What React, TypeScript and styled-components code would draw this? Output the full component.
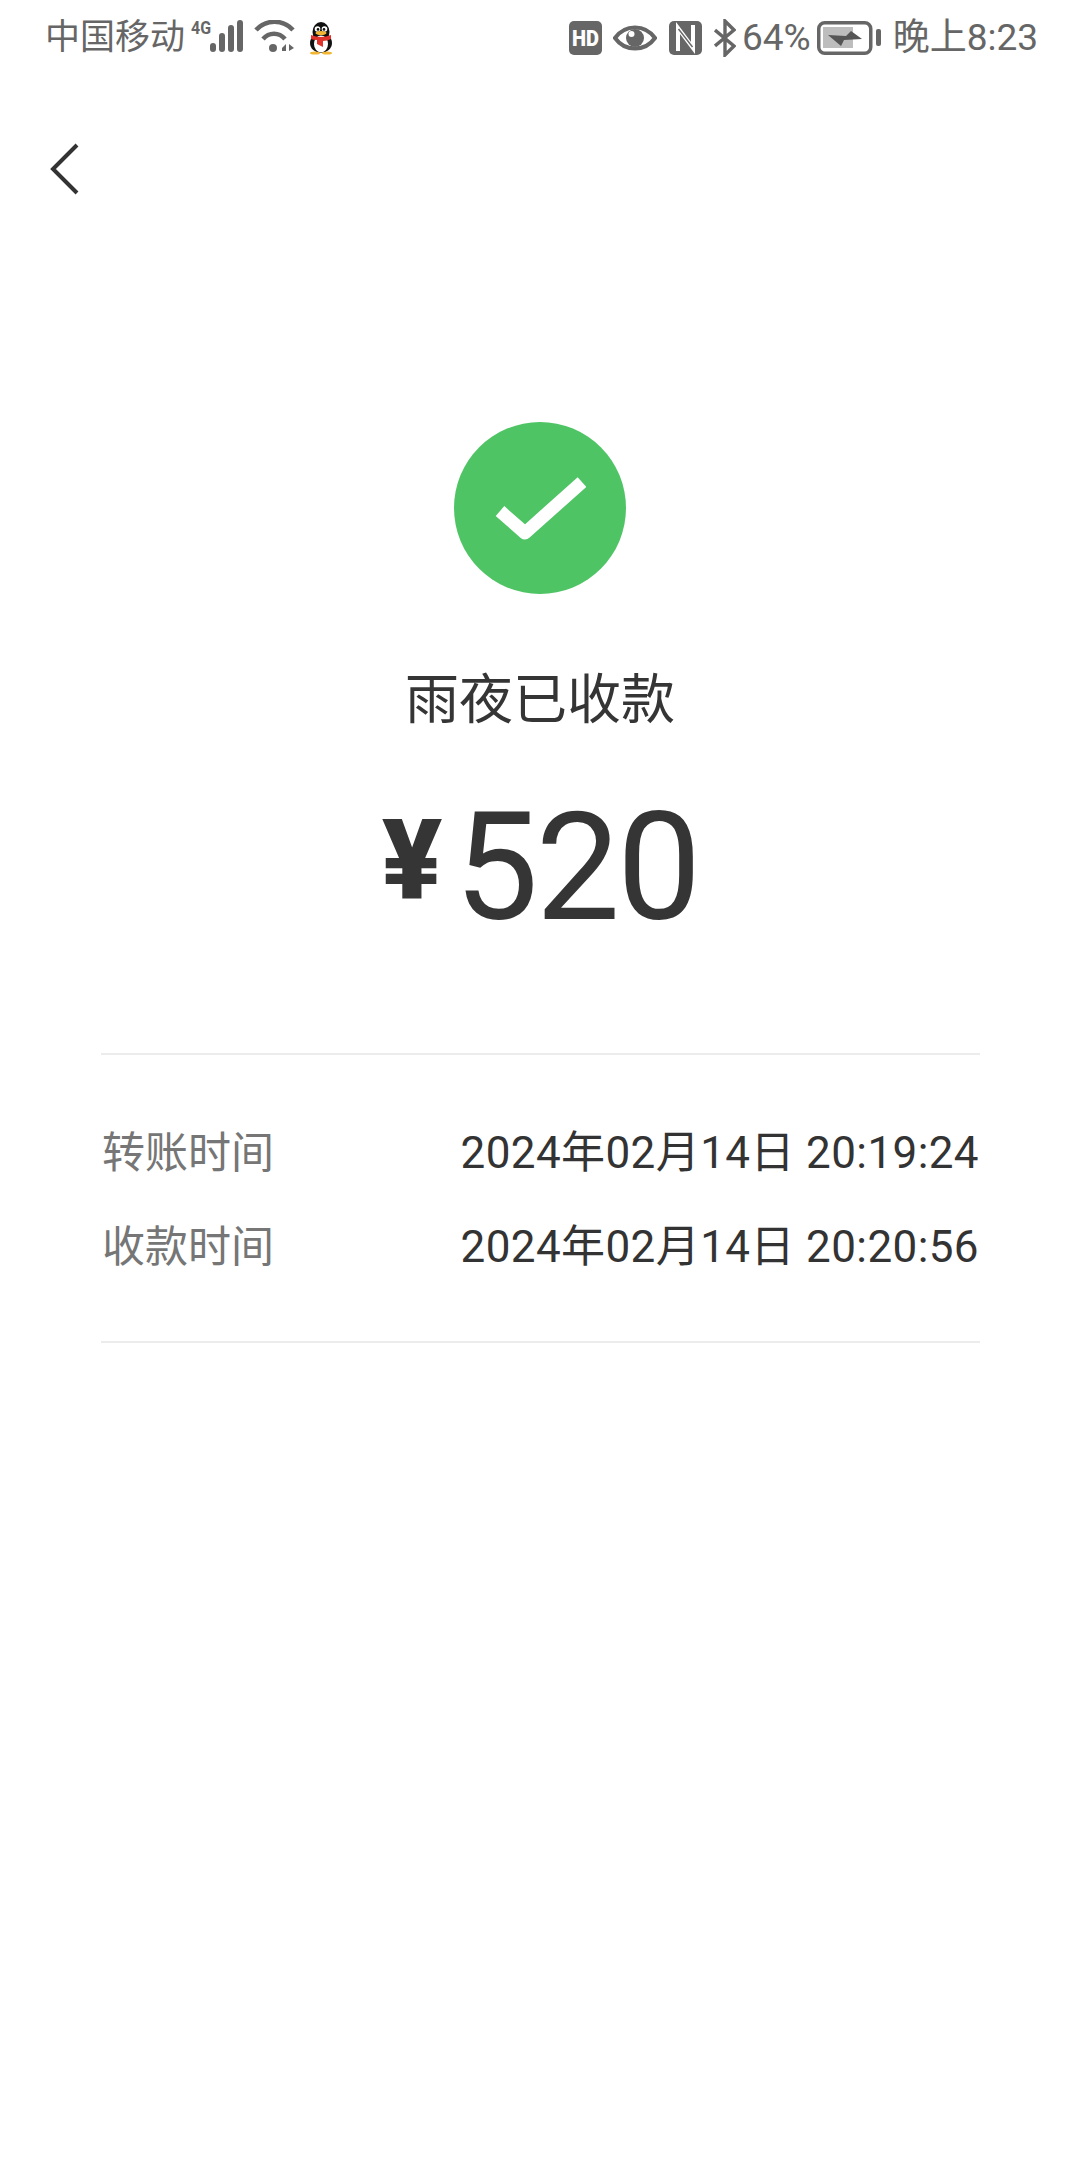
import styled, { createGlobalStyle } from 'styled-components';

const GlobalStyle = createGlobalStyle`
  html, body {
    margin: 0;
    padding: 0;
    background: #fff;
  }
  body {
    font-family: 'Roboto', 'Noto Sans CJK SC', sans-serif;
  }
`;

const Page = styled.div`
  width: 1080px;
  height: 2160px;
  background: #fff;
  overflow: hidden;
`;

const StatusBar = styled.div`
  height: 76px;
  padding: 0 42px 0 45px;
  display: flex;
  align-items: center;
  justify-content: space-between;
  color: #666;
`;

const StatusGroup = styled.div`
  display: flex;
  align-items: center;
`;

const StatusText = styled.span<{ $gap?: number; $size?: number }>`
  margin-left: ${(p) => p.$gap ?? 0}px;
  font-size: ${(p) => p.$size ?? 37}px;
  line-height: 54px;
  white-space: nowrap;
`;

const StatusIcon = styled.svg<{ $gap?: number }>`
  display: block;
  flex: none;
  margin-left: ${(p) => p.$gap ?? 0}px;
`;

const NavBar = styled.div`
  margin-top: 45px;
  height: 96px;
  padding-left: 50px;
  display: flex;
  align-items: center;
`;

const Hero = styled.div`
  margin-top: 205px;
  display: flex;
  flex-direction: column;
  align-items: center;
`;

const SuccessBadge = styled.div`
  width: 172px;
  height: 172px;
  border-radius: 50%;
  background: #4fc464;
  display: flex;
  align-items: center;
  justify-content: center;
`;

const Title = styled.div`
  margin-top: 73px;
  font-size: 54px;
  line-height: 68px;
  color: #353535;
`;

const Amount = styled.div`
  margin-top: 63px;
  height: 140px;
  display: flex;
  align-items: flex-start;
  color: #353535;
`;

const Currency = styled.span`
  font-size: 112px;
  font-weight: 900;
  line-height: 123px;
  margin-right: 12px;
`;

const Value = styled.span`
  font-size: 150px;
  line-height: 140px;
  letter-spacing: -3px;
`;

const Details = styled.div`
  margin: 115px 100px 0 101px;
  padding: 64px 1px 68px 1px;
  border-top: 2px solid #ececec;
  border-bottom: 2px solid #ececec;
  display: flex;
  flex-direction: column;
  gap: 34px;
`;

const DetailRow = styled.div`
  display: flex;
  justify-content: space-between;
  align-items: center;
  height: 60px;
`;

const DetailLabel = styled.span`
  font-size: 43px;
  color: #767676;
`;

const DetailValue = styled.span`
  font-size: 44px;
  letter-spacing: 0.4px;
  color: #333;
  white-space: nowrap;
`;

const details = [
  { label: '转账时间', value: '2024年02月14日 20:19:24' },
  { label: '收款时间', value: '2024年02月14日 20:20:56' },
];

function App() {
  return (
    <Page>
      <GlobalStyle />
      <StatusBar>
        <StatusGroup>
          <StatusText $size={35}>中国移动</StatusText>
          <StatusIcon $gap={6} width="55" height="44" viewBox="0 -4 55 44">
            <text x="0" y="14" fontSize="18" fontWeight="700" fill="#666" fontFamily="Roboto" textLength="20" lengthAdjust="spacingAndGlyphs">4G</text>
            <g fill="#666">
              <rect x="19" y="23" width="6" height="9" rx="3" />
              <rect x="28" y="13" width="6" height="19" rx="3" />
              <rect x="37" y="5" width="6" height="27" rx="3" />
              <rect x="46" y="0" width="6" height="32" rx="3" />
            </g>
          </StatusIcon>
          <StatusIcon $gap={8} width="42" height="36" viewBox="0 0 42 36">
            <g fill="none" stroke="#666" strokeWidth="4.5">
              <path d="M2 10 C12 -1 29 -1 39 10" />
              <path d="M9 19 C15 12 25 12 31 19" />
            </g>
            <circle cx="19" cy="28" r="4" fill="#666" />
            <path d="M28 28 L32 24 V31 H28 Z M35 24 L40 28 L35 31 Z" fill="#666" />
          </StatusIcon>
          <StatusIcon $gap={11} width="28" height="34" viewBox="0 0 28 34">
            <ellipse cx="14" cy="11" rx="8.5" ry="10" fill="#111" />
            <ellipse cx="14" cy="22" rx="11" ry="10" fill="#111" />
            <ellipse cx="14" cy="23" rx="7" ry="8.5" fill="#fff" />
            <circle cx="10.5" cy="8" r="2.8" fill="#fff" />
            <circle cx="17.5" cy="8" r="2.8" fill="#fff" />
            <circle cx="11" cy="8.4" r="1.3" fill="#111" />
            <circle cx="17" cy="8.4" r="1.3" fill="#111" />
            <ellipse cx="14" cy="12" rx="5.5" ry="2" fill="#f2b632" />
            <path d="M4 14 Q14 18 24 14 L24 18 Q20 20 16 20 L16 26 L10 23 L10 19 Q6 19 4 18 Z" fill="#e0332b" />
            <ellipse cx="8" cy="32" rx="5" ry="1.6" fill="#f2b632" />
            <ellipse cx="20" cy="32" rx="5" ry="1.6" fill="#f2b632" />
          </StatusIcon>
        </StatusGroup>
        <StatusGroup>
          <StatusIcon width="33" height="34" viewBox="0 0 33 34">
            <rect width="33" height="34" rx="5" fill="#666" />
            <text x="16.5" y="25" textAnchor="middle" fontSize="22" fontWeight="900" fill="#fff" fontFamily="Roboto" textLength="27" lengthAdjust="spacingAndGlyphs">HD</text>
          </StatusIcon>
          <StatusIcon $gap={11} width="44" height="26" viewBox="0 0 44 26">
            <path d="M2 13 C12 -1 32 -1 42 13 C32 27 12 27 2 13 Z" fill="none" stroke="#666" strokeWidth="4" />
            <circle cx="22" cy="13" r="9" fill="#666" />
            <circle cx="18.5" cy="9" r="3" fill="#fff" />
          </StatusIcon>
          <StatusIcon $gap={12} width="33" height="34" viewBox="0 0 33 34">
            <rect width="33" height="34" rx="5" fill="#666" />
            <path d="M9 30 V7 L24 27 V4" fill="none" stroke="#fff" strokeWidth="4" />
            <path d="M9.5 8 L23.5 26" fill="none" stroke="#666" strokeWidth="1.4" />
          </StatusIcon>
          <StatusIcon $gap={12} width="22" height="38" viewBox="0 0 22 38">
            <path d="M1 11 L20 27 L11 36 V2 L20 11 L1 27" fill="none" stroke="#666" strokeWidth="3.4" />
          </StatusIcon>
          <StatusText $gap={6}>64%</StatusText>
          <StatusIcon $gap={6} width="64" height="34" viewBox="0 0 64 34">
            <rect x="1.75" y="1.75" width="52" height="30.5" rx="6" fill="none" stroke="#666" strokeWidth="3.5" />
            <rect x="6" y="6" width="30" height="21" fill="#bdbdbd" />
            <path d="M11 14 L29 15 L34 10 L45 18 L27 19 L24 25 Z" fill="#555" />
            <rect x="59" y="8" width="5" height="17" rx="2" fill="#666" />
          </StatusIcon>
          <StatusText $gap={12}>晚上8:23</StatusText>
        </StatusGroup>
      </StatusBar>
      <NavBar>
        <svg width="30" height="52" viewBox="0 0 30 52">
          <path d="M27 2 L3 26 L27 50" fill="none" stroke="#333" strokeWidth="4" />
        </svg>
      </NavBar>
      <Hero>
        <SuccessBadge>
          <svg width="92" height="66" viewBox="0 0 92 66">
            <path d="M6 36 L31 58 L88 7" fill="none" stroke="#fff" strokeWidth="13" strokeLinejoin="round" />
          </svg>
        </SuccessBadge>
        <Title>雨夜已收款</Title>
        <Amount>
          <Currency>¥</Currency>
          <Value>520</Value>
        </Amount>
      </Hero>
      <Details>
        {details.map((row) => (
          <DetailRow key={row.label}>
            <DetailLabel>{row.label}</DetailLabel>
            <DetailValue>{row.value}</DetailValue>
          </DetailRow>
        ))}
      </Details>
    </Page>
  );
}

export default App;
